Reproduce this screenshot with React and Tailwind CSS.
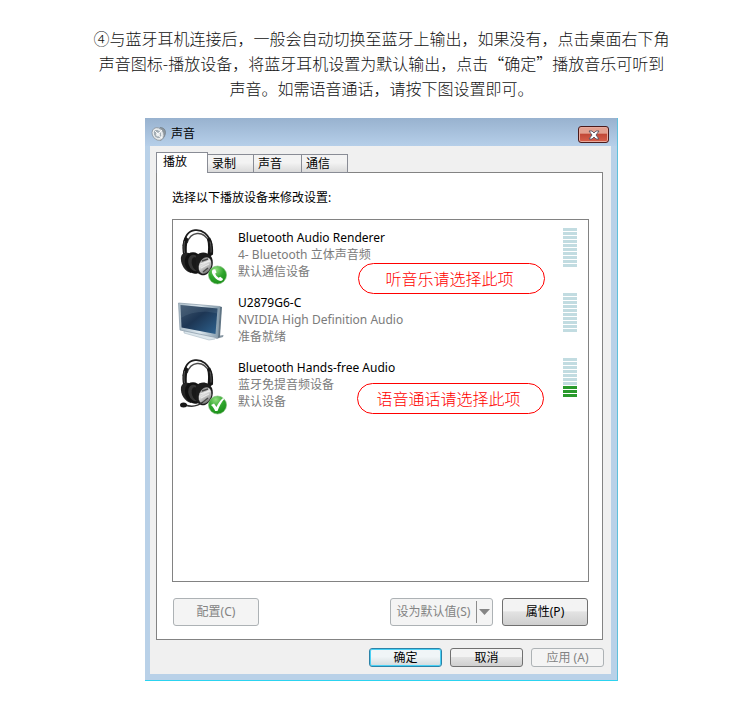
import { useId, useState } from "react";

const TABS = ["播放", "录制", "声音", "通信"];

const DEVICES = [
  {
    name: "Bluetooth Audio Renderer",
    detail: "4- Bluetooth 立体声音频",
    status: "默认通信设备",
    icon: "headphones",
    badge: "phone",
    level: 0,
    note: "听音乐请选择此项",
    notePlace: "top-[37px] left-[185px]",
  },
  {
    name: "U2879G6-C",
    detail: "NVIDIA High Definition Audio",
    status: "准备就绪",
    icon: "monitor",
    level: 0,
  },
  {
    name: "Bluetooth Hands-free Audio",
    detail: "蓝牙免提音频设备",
    status: "默认设备",
    icon: "headphones",
    badge: "check",
    mic: true,
    level: 3,
    note: "语音通话请选择此项",
    notePlace: "top-[27px] left-[184px]",
  },
];

function Badge({ kind, id }) {
  return (
    <g>
      <defs>
        <radialGradient id={id + "g"} cx="0.4" cy="0.2" r="0.9">
          <stop offset="0" stopColor="#8fdc7c" />
          <stop offset="0.5" stopColor="#2fa52c" />
          <stop offset="1" stopColor="#168a14" />
        </radialGradient>
      </defs>
      <circle cx="41.500" cy="49" r="9" fill={"url(#" + id + "g)"} stroke="#78b873" strokeWidth="0.600" />
      {kind === "phone" ? (
        <path
          d="M37 43.500c-1.500 1.200-1.500 3 0 5.500 1.600 2.900 4 5 6.600 5.800 1.700.5 3-.3 3.500-1.800l-2.800-2.200-1.700 1c-1.700-1-2.800-2.400-3.400-4.200l1.400-1.200-1.400-3.200z"
          fill="#fff"
        />
      ) : (
        <path d="M35 49l3-1.500 2.500 3.500c1.500-3.500 3.600-6.500 6.500-9l1.500.8c-3.300 3.800-5.300 7.600-7 12.200h-2.300c-1.100-2.400-2.300-4.200-4.200-6z" fill="#fff" />
      )}
    </g>
  );
}

function Headphones({ badge, mic }) {
  const id = useId();
  return (
    <svg width="52" height="60" viewBox="0 0 52 60" aria-hidden="true">
      <defs>
        <linearGradient id={id + "m"} x1="0" y1="0" x2="1" y2="1">
          <stop offset="0" stopColor="#555" />
          <stop offset="0.4" stopColor="#e2e2e2" />
          <stop offset="0.7" stopColor="#a5a5a5" />
          <stop offset="1" stopColor="#444" />
        </linearGradient>
      </defs>
      <path d="M7.500 20C8.500 10 12 5 19 4.200S33 8 35.500 19" fill="none" stroke="#1d1d1d" strokeWidth="1.800" />
      <path d="M11 17C13 11 16 8 21 7.500s9 2 12 8" fill="none" stroke="#4a4a4a" strokeWidth="1.400" />
      <path d="M6.500 20c.4-4 1.200-7 3-9.500l3 2.500c-1.800 4-2 9-1.500 17l-3 2c-1.200-4-1.800-8-1.500-12z" fill="#151515" />
      <path d="M31 13l3-1.500c2.600 4.500 3.500 9 3 17l-3 2-2.500-1.500c.8-6 .9-11-.5-16z" fill="#151515" />
      <path d="M8.500 15c-.6 4-.7 8 0 12M34 15.500c1 4 1.200 7 1 11" stroke="#777" strokeWidth="0.700" fill="none" />
      <path d="M5 31c1-4 4-5 8-4l6 14-4 6c-6-1-11-9-10-16z" fill="#252525" />
      <ellipse cx="18" cy="37" rx="9" ry="11" transform="rotate(-18 18 37)" fill="#111" />
      <ellipse cx="18.500" cy="37" rx="6" ry="8.500" transform="rotate(-18 18.500 37)" fill="#353535" />
      <ellipse cx="20" cy="38" rx="4" ry="7" transform="rotate(-18 20 38)" fill="#181818" />
      <path d="M20 30c5-6 13-4 16 2 2.500 7-1 14-7 17-4 1-8-1-9-6z" fill="#1c1c1c" />
      <ellipse cx="29" cy="39.500" rx="6" ry="8.500" transform="rotate(22 29 39.500)" fill={"url(#" + id + "m)"} />
      <path d="M24 38l10-3M25 42l8-4" stroke="#efefef" strokeWidth="0.900" />
      <path d="M26 35l6-2M27 46l5-4" stroke="#4a4a4a" strokeWidth="1.400" />
      {mic && (
        <g>
          <path d="M27 46c-5 4-12 5-18 3" fill="none" stroke="#333" strokeWidth="1.500" />
          <ellipse cx="7.500" cy="49" rx="3.500" ry="2.500" fill="#171717" />
        </g>
      )}
      <Badge kind={badge} id={id} />
    </svg>
  );
}

function Monitor() {
  const id = useId();
  return (
    <svg width="52" height="60" viewBox="0 0 52 60" aria-hidden="true">
      <defs>
        <linearGradient id={id + "s"} x1="0" y1="0" x2="1" y2="1">
          <stop offset="0" stopColor="#40566e" />
          <stop offset="0.45" stopColor="#1d3654" />
          <stop offset="1" stopColor="#2e6390" />
        </linearGradient>
        <linearGradient id={id + "f"} x1="0" y1="0" x2="1" y2="0">
          <stop offset="0" stopColor="#a9bac6" />
          <stop offset="0.5" stopColor="#dce7ee" />
          <stop offset="1" stopColor="#7f97a8" />
        </linearGradient>
      </defs>
      <path d="M8 40l8-2 26 6-3 4-6 1-25-7z" fill="#dce6ec" stroke="#a7b8c5" strokeWidth="0.600" />
      <path d="M40 48l7-2 .5-2-6 1z" fill="#8796a2" />
      <path d="M2.500 12L44 15.500 42 47 4 39z" fill={"url(#" + id + "f)"} stroke="#8698a6" strokeWidth="0.700" />
      <path d="M44 15.500l2 .5-2 30-2 1z" fill="#5f7484" />
      <path d="M4.500 14l37 3.500L39.500 43 5.500 36.500z" fill={"url(#" + id + "s)"} />
      <path d="M4.500 14l37 3.500-.5 5C28 19 15 21 5 27z" fill="#7890a5" opacity="0.200" />
    </svg>
  );
}

function SpeakerIcon() {
  return (
    <svg width="16" height="16" viewBox="0 0 16 16" aria-hidden="true">
      <path d="M9 1.500c3.500 0 5.500 2 5.500 5 0 3-2 6-5 8z" fill="#8d979e" stroke="#6c767d" strokeWidth="0.600" />
      <ellipse cx="7" cy="8" rx="5.500" ry="6.800" transform="rotate(-35 7 8)" fill="#dfe3e6" stroke="#858f96" strokeWidth="0.700" />
      <ellipse cx="6.500" cy="8" rx="3.800" ry="5" transform="rotate(-35 6.500 8)" fill="#a3adb4" stroke="#f6f8f9" strokeWidth="0.800" />
      <circle cx="7" cy="8.500" r="2" fill="#eef1f3" />
      <path d="M8 7l3-3M4 5l3 3M8 10l3 2" stroke="#fff" strokeWidth="0.900" />
    </svg>
  );
}

function Meter({ level }) {
  return (
    <div className="flex flex-col gap-px pt-0.5" role="img" aria-label={"音量 " + level}>
      {Array.from({ length: 10 }, (_, i) => (
        <span key={i} className={i >= 10 - level ? "h-[3px] w-3.5 bg-[#299a2c]" : "h-[3px] w-3.5 bg-[#c2dce1]"} />
      ))}
    </div>
  );
}

function Device({ device }) {
  return (
    <li className="relative flex h-[65px] pr-[11px] pl-[3px]">
      {device.icon === "monitor" ? <Monitor /> : <Headphones badge={device.badge} mic={device.mic} />}
      <div className="ml-2.5 flex-1 pt-[3px] text-xs leading-[17px] whitespace-nowrap text-[#7b7b7b]">
        <p className="text-black">{device.name}</p>
        <p>{device.detail}</p>
        <p>{device.status}</p>
      </div>
      <Meter level={device.level} />
      {device.note && (
        <span
          className={
            "absolute flex h-[31px] w-[187px] items-center justify-center rounded-full border border-[#f00] bg-white pr-1 text-base font-light whitespace-nowrap text-[#f00] " +
            device.notePlace
          }
        >
          {device.note}
        </span>
      )}
    </li>
  );
}

const BUTTON = "rounded-[3px] border text-xs leading-4 whitespace-nowrap";
const ENABLED = "border-[#707070] bg-linear-to-b from-[#f3f3f3] from-45% via-[#e2e2e2] via-50% to-[#cfcfcf] text-black";
const DISABLED = "border-[#adb2b5] bg-[#f4f4f4] text-[#838383]";
const DEFAULT = "border-[#2c83a8] bg-linear-to-b from-[#f0f5f7] from-45% to-[#d2dadd] text-black shadow-[inset_0_0_0_1px_#48d0f5]";

export default function App() {
  const [tab, setTab] = useState(0);
  return (
    <main className="flex flex-col items-center bg-white pt-[26px] pb-[37px] pl-[13px] font-['Noto_Sans','Noto_Sans_CJK_SC',sans-serif]">
      <p className="text-center font-['Noto_Sans_CJK_SC',sans-serif] text-base leading-[25px] font-light text-[#111]">
        ④与蓝牙耳机连接后，一般会自动切换至蓝牙上输出，如果没有，点击桌面右下角
        <br />
        声音图标-播放设备，将蓝牙耳机设置为默认输出，点击“确定”播放音乐可听到
        <br />
        声音。如需语音通话，请按下图设置即可。
      </p>

      <section
        aria-label="声音"
        className="mt-[17px] w-full max-w-[473px] border-r border-b border-r-[#5fc0dc] border-b-[#2cd3f0] bg-[#b9d1e8] pr-1.5 pb-1.5 pl-[5px]"
      >
        <header className="-mr-1.5 -ml-[5px] flex h-7 items-start justify-between bg-linear-to-b from-[#98b2cf] to-[#b6cfe9] pt-2 pr-2 pl-1.5">
          <h1 className="flex items-center gap-1 text-xs leading-4 font-normal text-black">
            <SpeakerIcon />
            声音
          </h1>
          <button
            type="button"
            aria-label="关闭"
            className="flex h-[17px] w-[31px] items-center justify-center rounded-[3px] border border-[#4b1b1b] bg-linear-to-b from-[#e3a090] from-40% via-[#c24938] via-50% to-[#d8604b] shadow-[inset_0_0_0_1px_#e8aa9d]"
          >
            <svg width="12" height="10" viewBox="0 0 12 10" aria-hidden="true">
              <path d="M1 1h3l2 2 2-2h3L8 5l3 4H8L6 7 4 9H1l3-4z" fill="#fff" stroke="#575060" strokeWidth="0.900" />
            </svg>
          </button>
        </header>

        <div className="bg-[#f0f0f0] pt-1.5 pr-2 pb-[7px] pl-1.5">
          <div role="tablist" className="relative -mb-px flex items-end">
            {TABS.map((label, i) => (
              <button
                key={label}
                type="button"
                role="tab"
                aria-selected={i === tab}
                onClick={() => setTab(i)}
                className={
                  i === tab
                    ? "h-[21px] w-[52px] border border-b-0 border-[#898c95] bg-white pb-0.5 pl-1.5 text-left text-xs leading-4"
                    : "h-[19px] w-12 border border-l-0 border-[#898c95] bg-linear-to-b from-[#f3f3f3] from-45% to-[#dadada] pl-1 text-left text-xs leading-4 nth-2:w-[46px] last:w-[46px]"
                }
              >
                {label}
              </button>
            ))}
          </div>

          <div className="border border-[#838383] bg-white pt-4 pr-[13px] pb-[13px] pl-[15px]">
            <p className="text-xs leading-[18px] text-black">选择以下播放设备来修改设置:</p>
            <ul className="mt-3 h-[363px] border border-[#828282] bg-white pt-1.5">
              {DEVICES.map((d) => (
                <Device key={d.name} device={d} />
              ))}
            </ul>
            <div className="mt-4 flex h-7 pr-px pl-px">
              <button type="button" disabled className={BUTTON + " w-[86px] " + DISABLED}>
                配置(C)
              </button>
              <div className={"mr-[9px] ml-auto flex w-[103px] items-stretch " + BUTTON + " " + DISABLED}>
                <button type="button" disabled className="flex-1">
                  设为默认值(S)
                </button>
                <button
                  type="button"
                  disabled
                  aria-label="更多默认选项"
                  className="my-0.5 flex w-4 items-center justify-center border-l border-[#8c8c8c]"
                >
                  <svg width="11" height="6" viewBox="0 0 11 6" aria-hidden="true">
                    <path d="M0 0h11L5.500 6z" fill="#858585" />
                  </svg>
                </button>
              </div>
              <button type="button" className={BUTTON + " w-[86px] " + ENABLED}>
                属性(P)
              </button>
            </div>
          </div>

          <div className="-mr-px mt-2 flex justify-end gap-2">
            <button type="button" className={BUTTON + " h-[19px] w-[73px] " + DEFAULT}>
              确定
            </button>
            <button type="button" className={BUTTON + " h-[19px] w-[73px] " + ENABLED}>
              取消
            </button>
            <button type="button" disabled className={BUTTON + " h-[19px] w-[73px] " + DISABLED}>
              应用 (A)
            </button>
          </div>
        </div>
      </section>
    </main>
  );
}
